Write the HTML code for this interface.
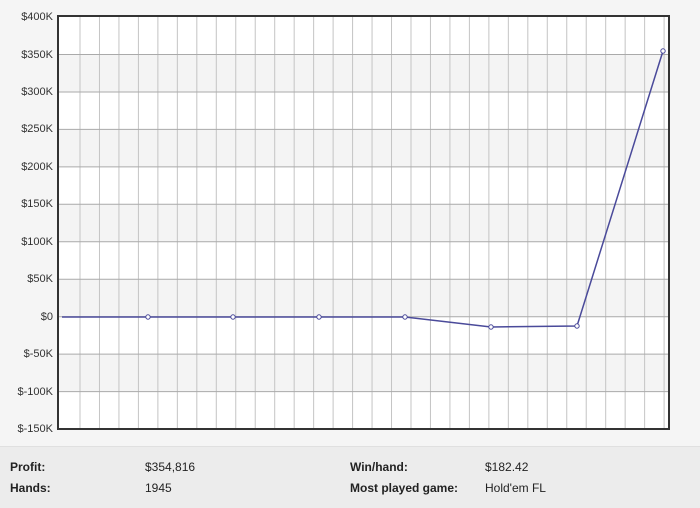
<!DOCTYPE html>
<html><head><style>
body{margin:0;width:700px;height:507px;background:#f5f5f5;font-family:"Liberation Sans",Arial,sans-serif;overflow:hidden;position:relative}
.yl{position:absolute;right:647px;font-size:11px;color:#333;line-height:12px}
.bot{position:absolute;left:0;top:446px;width:700px;height:61px;background:#ececec;border-top:1px solid #e0e0e0}
.t{position:absolute;font-size:12px;color:#222}
.b{font-weight:bold}
</style></head><body>
<svg width="700" height="446" style="position:absolute;left:0;top:0">
<g id="bands"></g>
<rect x="58" y="17" width="611" height="412" fill="#fff"/>
<rect x="58" y="54.5" width="611" height="37.5" fill="#f4f4f4"/>
<rect x="58" y="129.4" width="611" height="37.5" fill="#f4f4f4"/>
<rect x="58" y="204.3" width="611" height="37.5" fill="#f4f4f4"/>
<rect x="58" y="279.2" width="611" height="37.5" fill="#f4f4f4"/>
<rect x="58" y="354.1" width="611" height="37.5" fill="#f4f4f4"/>
<g stroke="#bbb" stroke-width="1">
<script>/*no*/</script>
</g>
<g id="v" stroke="#c4c4c4" stroke-width="1"></g>
<g stroke="#aaa" stroke-width="1">
<line x1="58" x2="669" y1="54.5" y2="54.5"/><line x1="58" x2="669" y1="92" y2="92"/>
<line x1="58" x2="669" y1="129.4" y2="129.4"/><line x1="58" x2="669" y1="166.9" y2="166.9"/>
<line x1="58" x2="669" y1="204.3" y2="204.3"/><line x1="58" x2="669" y1="241.8" y2="241.8"/>
<line x1="58" x2="669" y1="279.2" y2="279.2"/><line x1="58" x2="669" y1="316.7" y2="316.7"/>
<line x1="58" x2="669" y1="354.1" y2="354.1"/><line x1="58" x2="669" y1="391.6" y2="391.6"/>
</g>
<rect x="58" y="16" width="611" height="413" fill="none" stroke="#333" stroke-width="2"/>
<polyline points="62,317 148,317 233,317 319,317 405,317 491,327 577,326 663,51" fill="none" stroke="#4a4a9a" stroke-width="1.5"/>
<g fill="#fff" stroke="#4a4a9a" stroke-width="1">
<circle cx="148" cy="317" r="2.2"/><circle cx="233" cy="317" r="2.2"/><circle cx="319" cy="317" r="2.2"/><circle cx="405" cy="317" r="2.2"/><circle cx="491" cy="327" r="2.2"/><circle cx="577" cy="326" r="2.2"/><circle cx="663" cy="51" r="2.2"/>
</g>
</svg>
<script>
var g=document.getElementById('v'),s='';
for(var k=0;k<31;k++){var x=80+19.47*k;s+='<line x1="'+x+'" x2="'+x+'" y1="17" y2="429"/>';}
g.innerHTML=s;
</script>
<div class="yl" style="top:11px">$400K</div>
<div class="yl" style="top:49px">$350K</div>
<div class="yl" style="top:86px">$300K</div>
<div class="yl" style="top:123px">$250K</div>
<div class="yl" style="top:161px">$200K</div>
<div class="yl" style="top:198px">$150K</div>
<div class="yl" style="top:236px">$100K</div>
<div class="yl" style="top:273px">$50K</div>
<div class="yl" style="top:311px">$0</div>
<div class="yl" style="top:348px">$-50K</div>
<div class="yl" style="top:386px">$-100K</div>
<div class="yl" style="top:423px">$-150K</div>
<div class="bot"></div>
<div class="t b" style="left:10px;top:460px">Profit:</div>
<div class="t" style="left:145px;top:460px">$354,816</div>
<div class="t b" style="left:350px;top:460px">Win/hand:</div>
<div class="t" style="left:485px;top:460px">$182.42</div>
<div class="t b" style="left:10px;top:481px">Hands:</div>
<div class="t" style="left:145px;top:481px">1945</div>
<div class="t b" style="left:350px;top:481px">Most played game:</div>
<div class="t" style="left:485px;top:481px">Hold'em FL</div>
</body></html>
